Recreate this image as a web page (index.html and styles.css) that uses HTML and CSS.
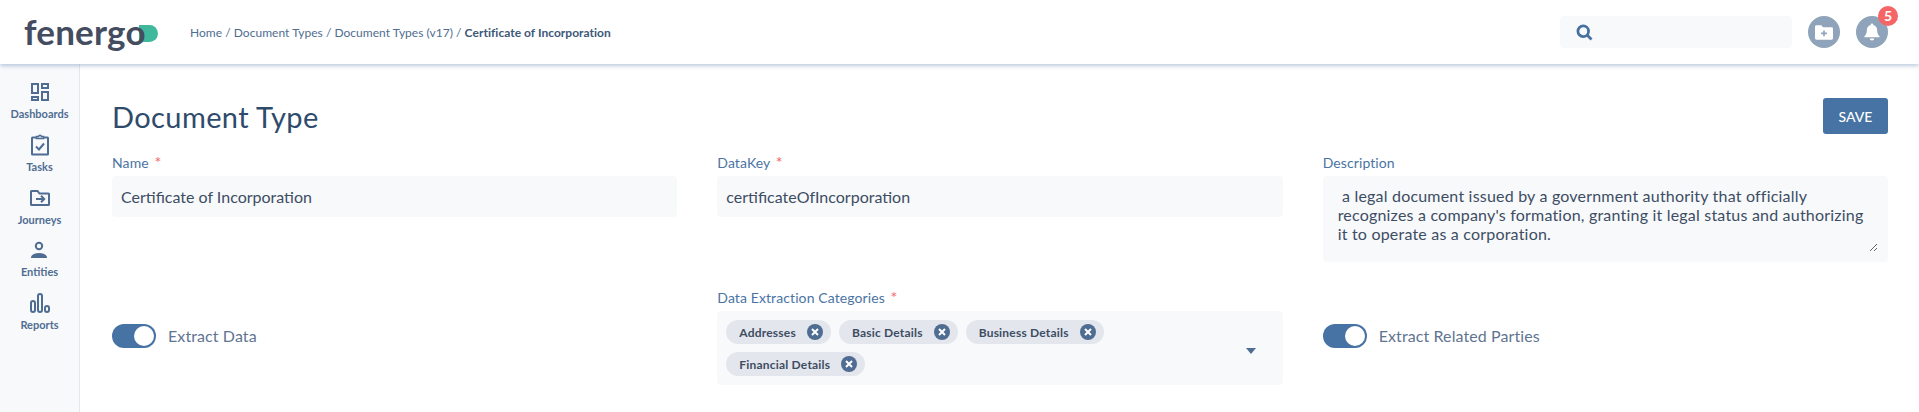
FILE: index.html
```html
<!DOCTYPE html>
<html lang="en">
<head>
    <meta charset="UTF-8">
    <title>Document Type</title>
    <link rel="stylesheet" href="styles.css">
</head>
<body>
    <header class="topbar">
        <div class="logo"><span class="logo-pill"></span><span class="logo-text">fenergo</span></div>
        <nav class="breadcrumb">Home / Document Types / Document Types (v17) / <b>Certificate of Incorporation</b></nav>
        <div class="search">
            <svg class="search-icon" viewBox="0 0 16 16"><circle cx="6.800" cy="6.800" r="5" /><path d="M10.600 10.600l4 4" /></svg>
        </div>
        <div class="round-btn">
            <svg viewBox="0 0 20 16" width="18" height="15"><path class="fill-white" d="M1.500 0h5.500l2 2.200h9.500a1.500 1.500 0 0 1 1.500 1.500v10.800a1.500 1.500 0 0 1-1.500 1.500h-17a1.500 1.500 0 0 1-1.500-1.500v-13a1.500 1.500 0 0 1 1.500-1.500z" /><path class="plus" d="M10 5.800v6.400M6.800 9h6.400" /></svg>
        </div>
        <div class="round-btn">
            <svg viewBox="0 0 18 20" width="16" height="18"><path class="fill-white" d="M9 0.500c1 0 1.500 .7 1.500 1.500c2.900 .7 4.300 3 4.300 6c0 3.600 1 5 2.700 6.800v1h-17v-1c1.700-1.800 2.700-3.200 2.700-6.800c0-3 1.400-5.300 4.300-6c0-.8 .5-1.500 1.500-1.500z" /><path class="fill-white" d="M6.500 17.300h5a2.500 2.300 0 0 1-5 0z" /></svg>
            <span class="badge">5</span>
        </div>
    </header>

    <div class="layout">
        <aside class="sidebar">
            <a class="side-item">
                <svg viewBox="0 0 24 24"><rect x="4" y="4" width="6" height="9" /><rect x="14" y="4" width="6" height="4" /><rect x="4" y="17" width="6" height="3" /><rect x="14" y="12" width="6" height="8" /></svg>
                <span>Dashboards</span>
            </a>
            <a class="side-item">
                <svg viewBox="0 0 24 24"><path d="M8.500 4.500h-4a.5 .5 0 0 0-.5 .5v16a.5 .5 0 0 0 .5 .5h15a.5 .5 0 0 0 .5-.5v-16a.5 .5 0 0 0-.5-.5h-4" /><path class="thin" d="M8.500 5.500v-2h2.200a1.300 1.300 0 0 1 2.600 0h2.200v2z" /><path d="M8 13.500l3 3l5-6" /></svg>
                <span>Tasks</span>
            </a>
            <a class="side-item">
                <svg viewBox="0 0 24 24"><path d="M3 18.500v-13a.5 .5 0 0 1 .5-.5h6l2 2.500h9a.5 .5 0 0 1 .5 .5v10.500a.5 .5 0 0 1-.5 .5h-17a.5 .5 0 0 1-.5-.5z" /><path d="M8 13h8M13 9.800l3.200 3.200l-3.200 3.200" /></svg>
                <span>Journeys</span>
            </a>
            <a class="side-item">
                <svg viewBox="0 0 24 24"><circle cx="12" cy="8" r="3.200" /><path class="solid" d="M4 20v-.5c0-2.800 4-4.500 8-4.500s8 1.700 8 4.500v.5z" /></svg>
                <span>Entities</span>
            </a>
            <a class="side-item">
                <svg viewBox="0 0 24 24"><rect x="3" y="10" width="4" height="11" rx="2" /><rect x="10" y="3" width="4" height="18" rx="2" /><rect x="17" y="15" width="4" height="6" rx="2" /></svg>
                <span>Reports</span>
            </a>
        </aside>

        <main class="content">
            <div class="title-row">
                <h1>Document Type</h1>
                <button class="btn-save">SAVE</button>
            </div>

            <div class="form-grid">
                <div class="field">
                    <label>Name <i>*</i></label>
                    <input type="text" value="Certificate of Incorporation">
                </div>
                <div class="field">
                    <label>DataKey <i>*</i></label>
                    <input type="text" value="certificateOfIncorporation">
                </div>
                <div class="field">
                    <label>Description</label>
                    <div class="textarea-box">
                        <textarea rows="3"> a legal document issued by a government authority that officially recognizes a company's formation, granting it legal status and authorizing it to operate as a corporation.</textarea>
                    </div>
                </div>

                <div class="toggle-field">
                    <span class="toggle"></span>
                    <span class="toggle-label">Extract Data</span>
                </div>
                <div class="field">
                    <label>Data Extraction Categories <i>*</i></label>
                    <div class="multi-select">
                        <div class="chips">
                            <span class="chip">Addresses <svg viewBox="0 0 16 16"><circle cx="8" cy="8" r="8" /><path d="M5 5l6 6M11 5l-6 6" /></svg></span>
                            <span class="chip">Basic Details <svg viewBox="0 0 16 16"><circle cx="8" cy="8" r="8" /><path d="M5 5l6 6M11 5l-6 6" /></svg></span>
                            <span class="chip">Business Details <svg viewBox="0 0 16 16"><circle cx="8" cy="8" r="8" /><path d="M5 5l6 6M11 5l-6 6" /></svg></span>
                            <span class="chip">Financial Details <svg viewBox="0 0 16 16"><circle cx="8" cy="8" r="8" /><path d="M5 5l6 6M11 5l-6 6" /></svg></span>
                        </div>
                        <span class="caret"></span>
                    </div>
                </div>
                <div class="toggle-field">
                    <span class="toggle"></span>
                    <span class="toggle-label">Extract Related Parties</span>
                </div>
            </div>
        </main>
    </div>
</body>
</html>
```

FILE: styles.css
```css
:root {
    --blue: #4673a3;
    --slate: #4f6d92;
    --text: #3d4d63;
    --field-bg: #f8f9fb;
    --red: #f56565;
}

*, *::before, *::after {
    box-sizing: border-box;
    margin: 0;
    padding: 0;
}

body {
    font-family: 'Lato', sans-serif;
    background: #fff;
    color: var(--text);
    height: 100vh;
    overflow: hidden;
    display: flex;
    flex-direction: column;
}

/* Top bar */
.topbar {
    height: 64px;
    flex: none;
    display: flex;
    align-items: center;
    padding: 0 31px 0 24px;
    background: #fff;
    box-shadow: 0 2px 4px rgba(70, 110, 160, 0.35);
    position: relative;
    z-index: 2;
}

.logo {
    width: 166px;
    display: flex;
    align-items: center;
    position: relative;
}
.logo-text {
    font-size: 35px;
    line-height: 44px;
    font-weight: 700;
    letter-spacing: 0.200px;
    color: #434d5f;
    position: relative;
    margin-top: -2px;
}
.logo-pill {
    position: absolute;
    left: 115px;
    top: 14px;
    width: 19px;
    height: 17px;
    border-radius: 0 9px 9px 0;
    background: #3fb89b;
}

.breadcrumb {
    flex: 1;
    font-size: 12px;
    letter-spacing: 0.030px;
    color: #4f6d92;
}
.breadcrumb b { color: #3d5878; }

.search {
    width: 232px;
    height: 32px;
    background: var(--field-bg);
    border-radius: 4px;
    display: flex;
    align-items: center;
    padding-left: 16px;
    margin-right: 16px;
}
.search-icon {
    width: 17px;
    height: 17px;
    fill: none;
    stroke: #46709f;
    stroke-width: 2.600;
}

.round-btn {
    width: 32px;
    height: 32px;
    border-radius: 50%;
    background: #8fa3ba;
    display: flex;
    align-items: center;
    justify-content: center;
    position: relative;
}
.round-btn + .round-btn { margin-left: 16px; }
.fill-white { fill: #fff; }
.plus { fill: none; stroke: #8fa3ba; stroke-width: 1.800; }

.badge {
    position: absolute;
    top: -10px;
    right: -10px;
    width: 20px;
    height: 20px;
    border-radius: 50%;
    background: var(--red);
    color: #fff;
    font-size: 14px;
    font-weight: 700;
    text-align: center;
    line-height: 20px;
}

/* Layout */
.layout {
    flex: 1;
    display: flex;
    min-height: 0;
}

.sidebar {
    width: 80px;
    flex: none;
    background: var(--field-bg);
    border-right: 1px solid #e4e8ee;
    padding-top: 16px;
    display: flex;
    flex-direction: column;
    align-items: center;
    gap: 11.750px;
}
.side-item {
    display: flex;
    flex-direction: column;
    align-items: center;
    gap: 3px;
    color: var(--slate);
    font-size: 11px;
    font-weight: 700;
    line-height: 14px;
}
.side-item svg {
    width: 24px;
    height: 24px;
    fill: none;
    stroke: var(--slate);
    stroke-width: 2;
}
.side-item svg .thin { stroke-width: 1.400; fill: var(--field-bg); }
.side-item svg .solid { fill: var(--slate); stroke: none; }

/* Content */
.content {
    flex: 1;
    padding: 34px 31px 0 32px;
}

.title-row {
    display: flex;
    justify-content: space-between;
    align-items: center;
    height: 36px;
    margin-bottom: 20px;
}
h1 {
    font-size: 29px;
    font-weight: 400;
    letter-spacing: 0.400px;
    color: #2f4b6c;
}
.btn-save {
    width: 65px;
    height: 36px;
    border: 0;
    border-radius: 3px;
    background: var(--blue);
    color: #fff;
    font-family: inherit;
    font-size: 14px;
    font-weight: 500;
}

.form-grid {
    display: grid;
    grid-template-columns: repeat(3, 1fr);
    column-gap: 40px;
    row-gap: 27px;
}

.field label {
    display: block;
    font-size: 14px;
    letter-spacing: 0.100px;
    line-height: 18px;
    margin-bottom: 4px;
    color: #4a74a3;
}
.field label i {
    color: var(--red);
    font-size: 16px;
    line-height: 0;
    font-style: normal;
    margin-left: 2px;
}

.field input, .field textarea {
    display: block;
    width: 100%;
    border: 0;
    font-family: inherit;
    font-size: 16px;
    color: var(--text);
    outline: none;
}
.field input {
    height: 41px;
    padding: 0 9px;
    background: var(--field-bg);
    border-radius: 4px;
}
.textarea-box {
    height: 86px;
    padding: 10px 10px 10px 15px;
    background: var(--field-bg);
    border-radius: 4px;
}
.field textarea {
    height: 66px;
    padding: 0 8px 0 0;
    background: transparent;
    overflow: hidden;
    line-height: 19px;
    letter-spacing: 0.200px;
}

.multi-select {
    height: 74px;
    background: var(--field-bg);
    border-radius: 4px;
    padding: 9px;
    display: flex;
    justify-content: space-between;
}
.chips {
    display: flex;
    flex-wrap: wrap;
    gap: 8px;
    width: 480px;
    align-content: flex-start;
}
.chip {
    height: 24px;
    padding: 0 8px 0 13px;
    border-radius: 12px;
    background: #e3e6ec;
    display: inline-flex;
    align-items: center;
    gap: 11px;
    font-size: 12px;
    letter-spacing: 0.200px;
    font-weight: 700;
    color: #3d4d63;
}
.chip svg {
    width: 16px;
    height: 16px;
    fill: #4f6d92;
}
.chip svg path {
    fill: none;
    stroke: #fff;
    stroke-width: 2;
}
.caret {
    width: 0;
    height: 0;
    margin: 28px 18px 0 0;
    border-left: 5px solid transparent;
    border-right: 5px solid transparent;
    border-top: 6px solid var(--slate);
}

.toggle-field {
    display: flex;
    align-items: center;
    gap: 12px;
    padding-bottom: 3px;
}
.toggle {
    width: 44px;
    height: 24px;
    border-radius: 12px;
    background: var(--blue);
    position: relative;
}
.toggle::after {
    content: "";
    position: absolute;
    top: 2px;
    right: 2px;
    width: 20px;
    height: 20px;
    border-radius: 50%;
    background: #fff;
}
.toggle-label {
    font-size: 16px;
    letter-spacing: 0.100px;
    color: #5f7491;
}
```
